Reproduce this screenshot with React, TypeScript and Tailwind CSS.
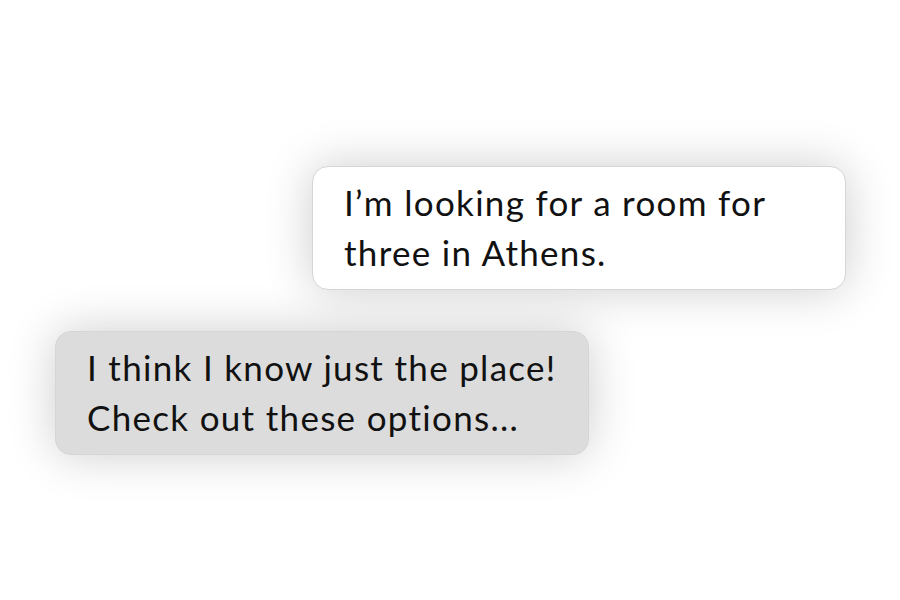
export default function App() {
  const messages = [
    { text: ['I’m looking for a room for', 'three in Athens.'], bg: 'bg-white', ml: 'ml-[312px]' },
    { text: ['I think I know just the place!', 'Check out these options...'], bg: 'bg-[#dcdcdc]', ml: 'ml-[55px]' },
  ]

  return (
    <div className="w-[900px] h-[600px] bg-white overflow-hidden font-['Lato',sans-serif] text-[#111]">
      <div className="flex flex-col gap-[41px] pt-[166px]">
        {messages.map((m, i) => (
          <div
            key={i}
            className={`${m.bg} ${m.ml} w-[534px] h-[124px] rounded-[16px] border border-[#d6d6d6] shadow-[0_0_48px_rgba(0,0,0,0.2)] px-[31px] pt-[10px] text-[35px] leading-[50px] tracking-[1.3px]`}
          >
            {m.text.map((line, j) => (
              <div key={j}>{line}</div>
            ))}
          </div>
        ))}
      </div>
    </div>
  )
}
